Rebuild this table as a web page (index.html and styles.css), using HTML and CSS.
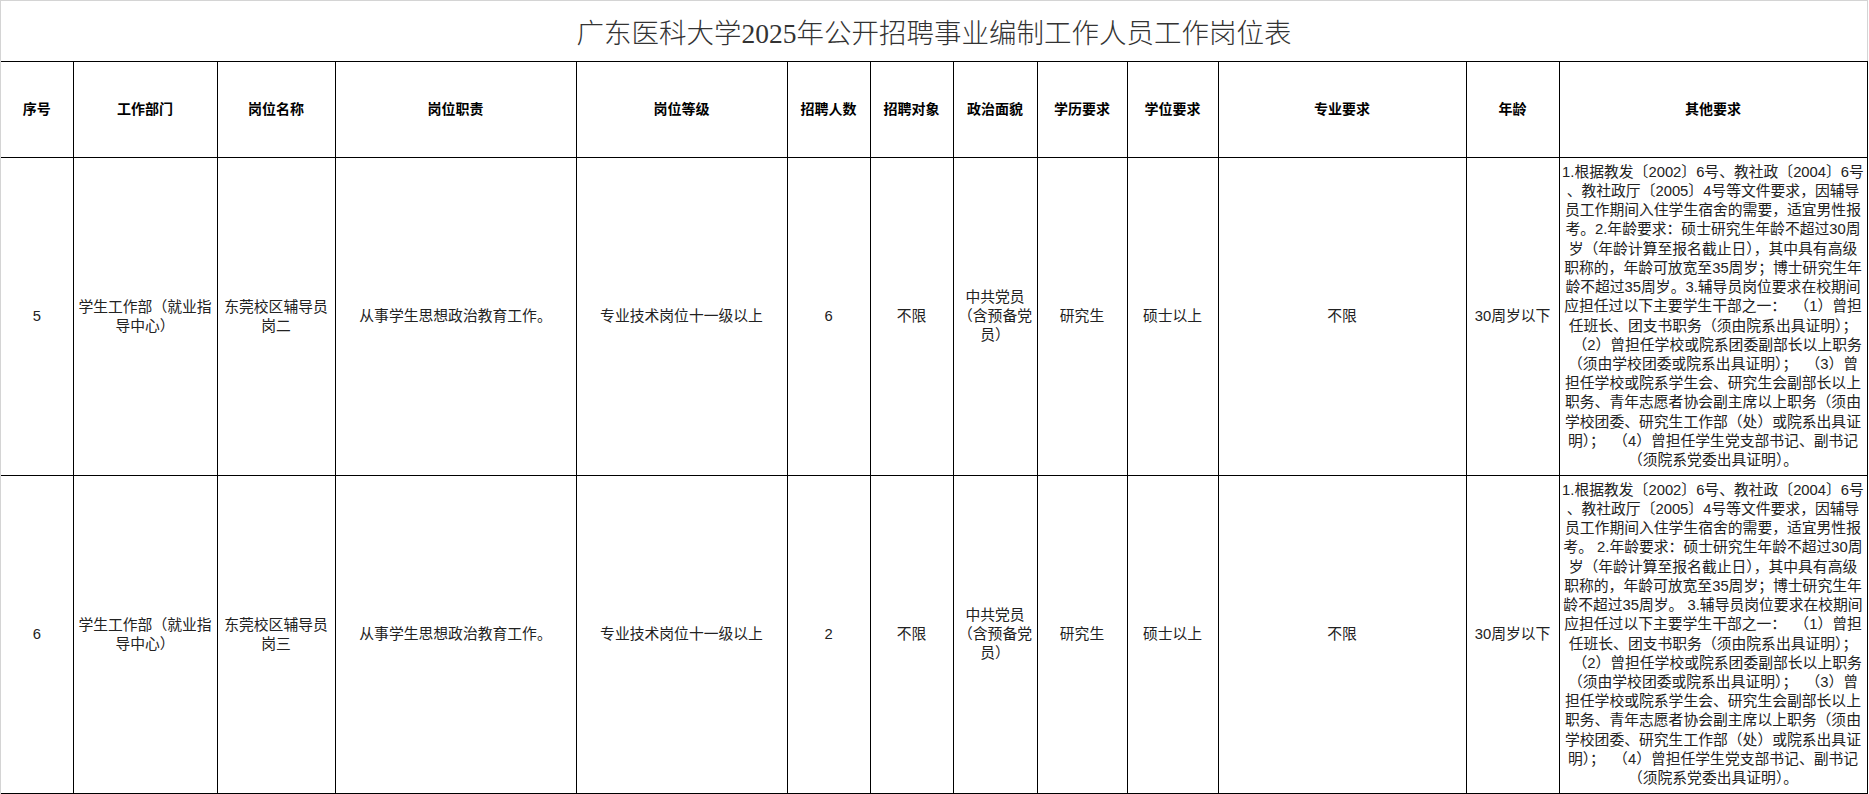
FILE: index.html
```html
<!DOCTYPE html>
<html lang="zh-CN">
<head>
<meta charset="utf-8">
<title>岗位表</title>
<link rel="stylesheet" href="styles.css">
</head>
<body>
<div class="sheet">
  <div class="title">广东医科大学2025年公开招聘事业编制工作人员工作岗位表</div>
  <table class="grid">
    <colgroup>
      <col class="c1"><col class="c2"><col class="c3"><col class="c4"><col class="c5"><col class="c6"><col class="c7"><col class="c8"><col class="c9"><col class="c10"><col class="c11"><col class="c12"><col class="c13">
    </colgroup>
    <thead>
      <tr class="head">
        <th>序号</th><th>工作部门</th><th>岗位名称</th><th>岗位职责</th><th>岗位等级</th><th>招聘人数</th><th>招聘对象</th><th>政治面貌</th><th>学历要求</th><th>学位要求</th><th>专业要求</th><th>年龄</th><th>其他要求</th>
      </tr>
    </thead>
    <tbody>
      <tr class="row">
        <td>5</td>
        <td>学生工作部（就业指导中心）</td>
        <td>东莞校区辅导员岗二</td>
        <td>从事学生思想政治教育工作。</td>
        <td>专业技术岗位十一级以上</td>
        <td>6</td>
        <td>不限</td>
        <td class="narrow">中共党员（含预备党员）</td>
        <td>研究生</td>
        <td>硕士以上</td>
        <td>不限</td>
        <td>30周岁以下</td>
        <td class="other">
          <span class="ln">1.根据教发〔2002〕6号、教社政〔2004〕6号</span>
          <span class="ln">、教社政厅〔2005〕4号等文件要求，因辅导</span>
          <span class="ln">员工作期间入住学生宿舍的需要，适宜男性报</span>
          <span class="ln">考。2.年龄要求：硕士研究生年龄不超过30周</span>
          <span class="ln">岁（年龄计算至报名截止日），其中具有高级</span>
          <span class="ln">职称的，年龄可放宽至35周岁；博士研究生年</span>
          <span class="ln">龄不超过35周岁。3.辅导员岗位要求在校期间</span>
          <span class="ln">应担任过以下主要学生干部之一：  （1）曾担</span>
          <span class="ln">任班长、团支书职务（须由院系出具证明）；</span>
          <span class="ln">  （2）曾担任学校或院系团委副部长以上职务</span>
          <span class="ln">（须由学校团委或院系出具证明）；  （3）曾</span>
          <span class="ln">担任学校或院系学生会、研究生会副部长以上</span>
          <span class="ln">职务、青年志愿者协会副主席以上职务（须由</span>
          <span class="ln">学校团委、研究生工作部（处）或院系出具证</span>
          <span class="ln">明）；  （4）曾担任学生党支部书记、副书记</span>
          <span class="ln">（须院系党委出具证明）。</span>
        </td>
      </tr>
      <tr class="row">
        <td>6</td>
        <td>学生工作部（就业指导中心）</td>
        <td>东莞校区辅导员岗三</td>
        <td>从事学生思想政治教育工作。</td>
        <td>专业技术岗位十一级以上</td>
        <td>2</td>
        <td>不限</td>
        <td class="narrow">中共党员（含预备党员）</td>
        <td>研究生</td>
        <td>硕士以上</td>
        <td>不限</td>
        <td>30周岁以下</td>
        <td class="other">
          <span class="ln">1.根据教发〔2002〕6号、教社政〔2004〕6号</span>
          <span class="ln">、教社政厅〔2005〕4号等文件要求，因辅导</span>
          <span class="ln">员工作期间入住学生宿舍的需要，适宜男性报</span>
          <span class="ln">考。 2.年龄要求：硕士研究生年龄不超过30周</span>
          <span class="ln">岁（年龄计算至报名截止日），其中具有高级</span>
          <span class="ln">职称的，年龄可放宽至35周岁；博士研究生年</span>
          <span class="ln">龄不超过35周岁。 3.辅导员岗位要求在校期间</span>
          <span class="ln">应担任过以下主要学生干部之一：  （1）曾担</span>
          <span class="ln">任班长、团支书职务（须由院系出具证明）；</span>
          <span class="ln">  （2）曾担任学校或院系团委副部长以上职务</span>
          <span class="ln">（须由学校团委或院系出具证明）；  （3）曾</span>
          <span class="ln">担任学校或院系学生会、研究生会副部长以上</span>
          <span class="ln">职务、青年志愿者协会副主席以上职务（须由</span>
          <span class="ln">学校团委、研究生工作部（处）或院系出具证</span>
          <span class="ln">明）；  （4）曾担任学生党支部书记、副书记</span>
          <span class="ln">（须院系党委出具证明）。</span>
        </td>
      </tr>
    </tbody>
  </table>
</div>
</body>
</html>
```

FILE: styles.css
```css
html, body {
  margin: 0;
  padding: 0;
  background: #ffffff;
}

.sheet {
  width: 1867px;
  border-top: 1px solid #d4d4d4;
  border-left: 1px solid #d4d4d4;
}

.title {
  height: 60px;
  border-right: 1px solid #d4d4d4;
  display: flex;
  align-items: center;
  justify-content: center;
  font-family: "Liberation Serif", "Noto Sans CJK SC", serif;
  font-size: 27.5px;
  font-weight: 300;
  color: #333333;
}

.grid {
  border-collapse: collapse;
  table-layout: fixed;
  width: 1866px;
}

.c1 { width: 72px; }
.c2 { width: 144px; }
.c3 { width: 118px; }
.c4 { width: 241px; }
.c5 { width: 211px; }
.c6 { width: 83px; }
.c7 { width: 83px; }
.c8 { width: 84px; }
.c9 { width: 90px; }
.c10 { width: 91px; }
.c11 { width: 248px; }
.c12 { width: 93px; }
.c13 { width: 308px; }

.grid th,
.grid td {
  border: 1px solid #000000;
  text-align: center;
  vertical-align: middle;
  padding: 0 2px;
  font-family: "Liberation Sans", "Noto Sans CJK SC", sans-serif;
  font-size: 14.8px;
  line-height: 19px;
  color: #222222;
}

.grid th:first-child,
.grid td:first-child {
  border-left: 0;
}

.grid th {
  font-size: 14px;
  font-weight: bold;
  color: #000000;
}

.head {
  height: 96px;
}

.row {
  height: 318px;
}

.grid td.narrow {
  padding: 0 4px;
}

.grid td.other {
  padding: 0 1px;
  line-height: 19.2px;
}

.ln {
  display: block;
  white-space: pre;
}
```
